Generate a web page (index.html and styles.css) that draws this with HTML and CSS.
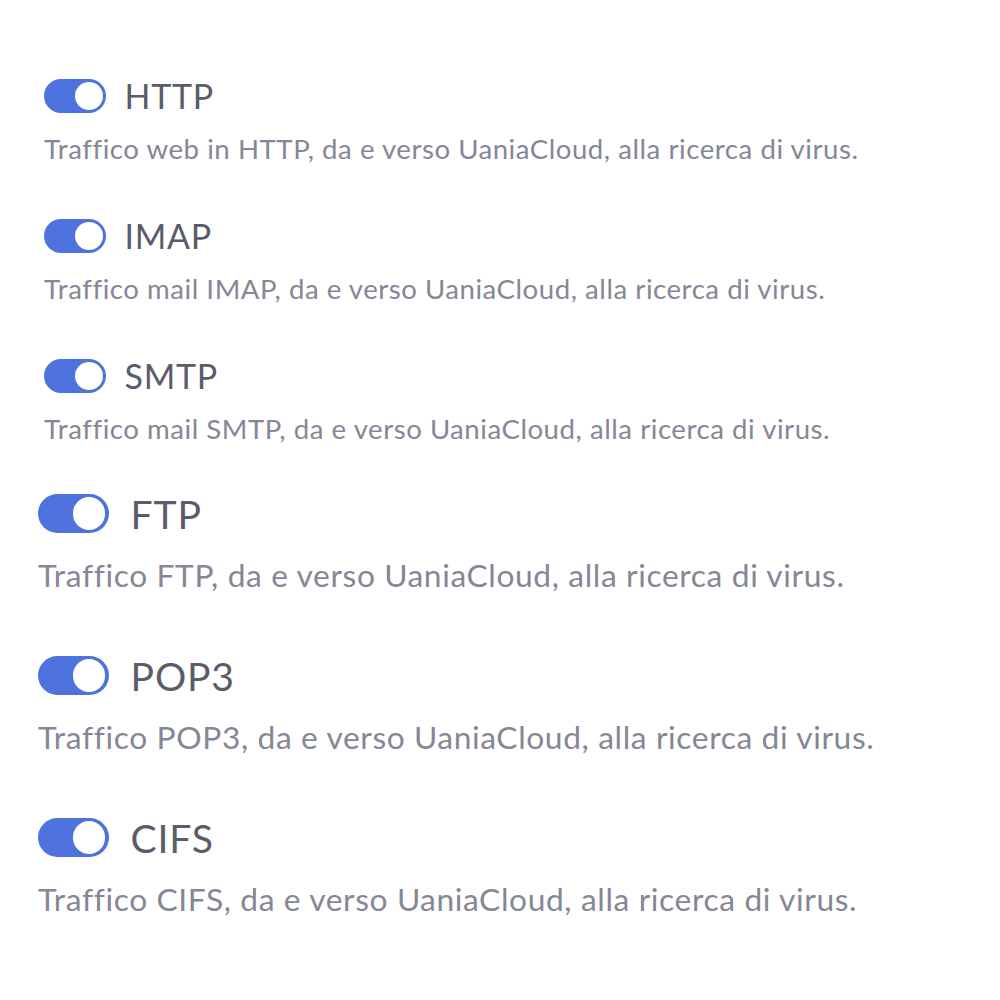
FILE: index.html
```
<!DOCTYPE html>
<html lang="it">
<head>
  <meta charset="UTF-8" />
  <title>Antivirus - Protocolli</title>
  <meta name="viewport" content="width=device-width, initial-scale=1.0" />
  <link rel="stylesheet" href="styles.css">
</head>
<body>
  <div class="protocols">
    <div class="group">
      <div class="item">
        <label class="switch-row">
          <span class="switch on"><span class="knob"></span></span>
          <span class="title">HTTP</span>
        </label>
        <p class="desc">Traffico web in HTTP, da e verso UaniaCloud, alla ricerca di virus.</p>
      </div>
      <div class="item">
        <label class="switch-row">
          <span class="switch on"><span class="knob"></span></span>
          <span class="title">IMAP</span>
        </label>
        <p class="desc">Traffico mail IMAP, da e verso UaniaCloud, alla ricerca di virus.</p>
      </div>
      <div class="item">
        <label class="switch-row">
          <span class="switch on"><span class="knob"></span></span>
          <span class="title">SMTP</span>
        </label>
        <p class="desc">Traffico mail SMTP, da e verso UaniaCloud, alla ricerca di virus.</p>
      </div>
    </div>

    <div class="group large">
      <div class="item">
        <label class="switch-row">
          <span class="switch on"><span class="knob"></span></span>
          <span class="title">FTP</span>
        </label>
        <p class="desc">Traffico FTP, da e verso UaniaCloud, alla ricerca di virus.</p>
      </div>
      <div class="item">
        <label class="switch-row">
          <span class="switch on"><span class="knob"></span></span>
          <span class="title">POP3</span>
        </label>
        <p class="desc">Traffico POP3, da e verso UaniaCloud, alla ricerca di virus.</p>
      </div>
      <div class="item">
        <label class="switch-row">
          <span class="switch on"><span class="knob"></span></span>
          <span class="title">CIFS</span>
        </label>
        <p class="desc">Traffico CIFS, da e verso UaniaCloud, alla ricerca di virus.</p>
      </div>
    </div>
  </div>
</body>
</html>
```

FILE: styles.css
```
body {
  margin: 0;
  background: #fff;
  font-family: Lato, "Noto Sans", sans-serif;
}

.protocols {
  padding-top: 79px;
}

.group {
  --s: 1;
  --gap: 50.6px;
  padding-left: 44px;
}

.group.large {
  --s: 1.15;
  --gap: 59.2px;
  padding-left: 38px;
  margin-top: 45.6px;
}

.item {
  margin-bottom: var(--gap);
}

.item:last-child {
  margin-bottom: 0;
}

.switch-row {
  display: flex;
  align-items: center;
  gap: calc(19px * var(--s));
  height: calc(34px * var(--s));
  cursor: pointer;
}

.switch {
  position: relative;
  width: calc(61.5px * var(--s));
  height: calc(34.5px * var(--s));
  border-radius: 999px;
  background: #4e73df;
  flex-shrink: 0;
}

.knob {
  position: absolute;
  top: calc(3.25px * var(--s));
  right: calc(3px * var(--s));
  width: calc(28px * var(--s));
  height: calc(28px * var(--s));
  border-radius: 50%;
  background: #fff;
}

.title {
  font-size: calc(34px * var(--s));
  letter-spacing: calc(0.75px * var(--s));
  line-height: calc(34px * var(--s));
  color: #5a5c69;
}

.desc {
  margin: calc(17px * var(--s)) 0 0;
  font-size: calc(27.6px * var(--s));
  letter-spacing: calc(0.54px * var(--s));
  line-height: calc(38.4px * var(--s));
  color: #858796;
}
```
